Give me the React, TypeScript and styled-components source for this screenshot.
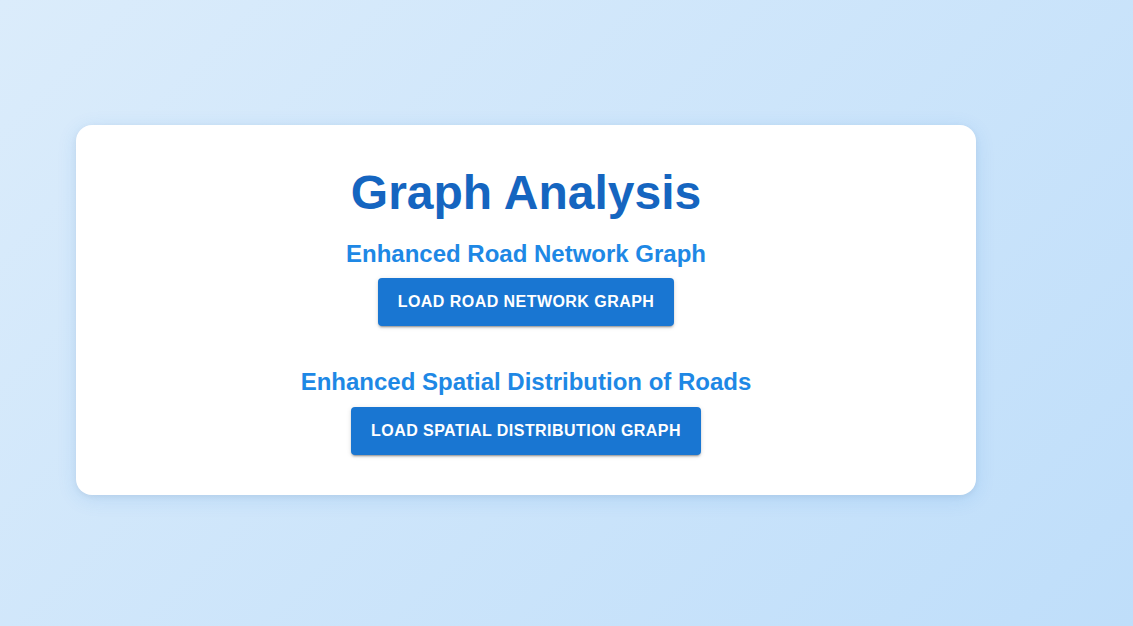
import React from "react";
import styled, { createGlobalStyle } from "styled-components";

const GlobalStyle = createGlobalStyle`
  html, body { margin: 0; padding: 0; }
  body {
    font-family: "Liberation Sans", Arial, sans-serif;
    background: linear-gradient(135deg, #dbecfb 0%, #bfdefa 100%);
    min-height: 100vh;
  }
`;

const Page = styled.div`
  min-height: 626px;
  box-sizing: border-box;
  padding: 125px 0 0 76px;
`;

const Card = styled.div`
  width: 900px;
  box-sizing: border-box;
  background: #ffffff;
  border-radius: 16px;
  box-shadow: 0 4px 20px rgba(25, 118, 210, 0.12), 0 2px 6px rgba(0, 0, 0, 0.06);
  padding: 39px 40px 40px;
  display: flex;
  flex-direction: column;
  align-items: center;
`;

const Title = styled.h1`
  margin: 0 0 16px;
  font-size: 48px;
  line-height: 1.2;
  font-weight: 700;
  color: #1565c0;
`;

const Section = styled.section<{ $last?: boolean }>`
  display: flex;
  flex-direction: column;
  align-items: center;
  gap: ${(p) => (p.$last ? "10px" : "9px")};
  margin-bottom: ${(p) => (p.$last ? "0" : "40px")};
`;

const Subtitle = styled.h2`
  margin: 0;
  font-size: 24px;
  line-height: 1.3;
  font-weight: 700;
  color: #1e88e5;
`;

const Button = styled.button`
  border: none;
  border-radius: 4px;
  background: #1976d2;
  color: #ffffff;
  font-family: "Liberation Sans", Arial, sans-serif;
  font-size: 16px;
  font-weight: 700;
  letter-spacing: 0.45px;
  text-transform: uppercase;
  line-height: 26px;
  padding: 11px 20px;
  cursor: pointer;
  box-shadow: 0px 3px 1px -2px rgba(0, 0, 0, 0.2), 0px 2px 2px 0px rgba(0, 0, 0, 0.14),
    0px 1px 5px 0px rgba(0, 0, 0, 0.12);
`;

export default function App() {
  return (
    <>
      <GlobalStyle />
      <Page>
        <Card>
          <Title>Graph Analysis</Title>
          <Section>
            <Subtitle>Enhanced Road Network Graph</Subtitle>
            <Button>Load Road Network Graph</Button>
          </Section>
          <Section $last>
            <Subtitle>Enhanced Spatial Distribution of Roads</Subtitle>
            <Button>Load Spatial Distribution Graph</Button>
          </Section>
        </Card>
      </Page>
    </>
  );
}
